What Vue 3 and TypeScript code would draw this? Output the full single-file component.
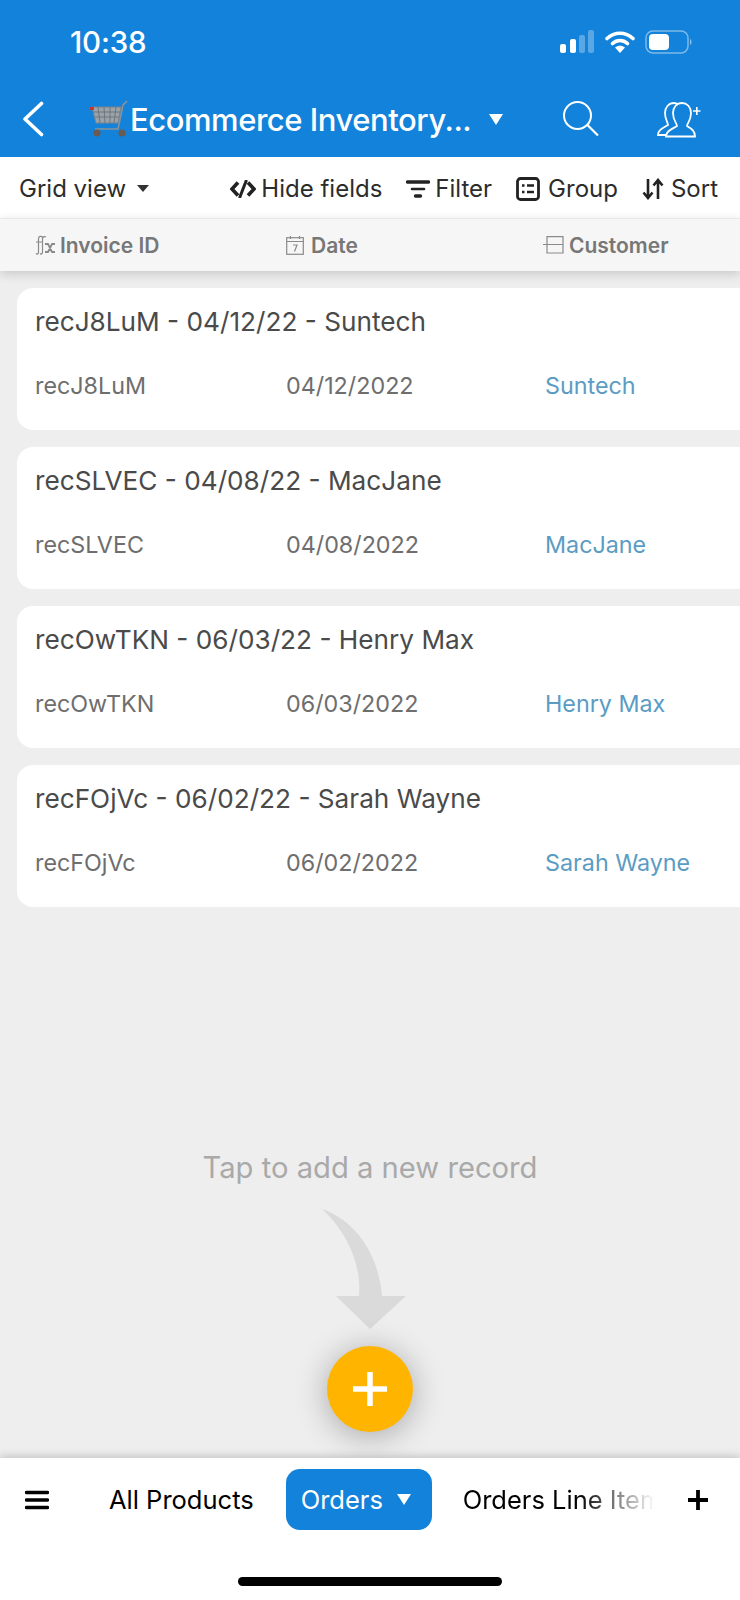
<script setup lang="ts">
interface Rec { id: string; short: string; date: string; customer: string }
const records: Rec[] = [
  { id: 'recJ8LuM', short: '04/12/22', date: '04/12/2022', customer: 'Suntech' },
  { id: 'recSLVEC', short: '04/08/22', date: '04/08/2022', customer: 'MacJane' },
  { id: 'recOwTKN', short: '06/03/22', date: '06/03/2022', customer: 'Henry Max' },
  { id: 'recFOjVc', short: '06/02/22', date: '06/02/2022', customer: 'Sarah Wayne' },
]
</script>

<template>
  <div class="page">
    <header class="head">
      <div class="status">
        <span class="time">10:38</span>
        <div class="sys">
          <svg width="35" height="23" viewBox="0 0 35 23">
            <rect x="0" y="14" width="6" height="9" rx="2" fill="#fff" />
            <rect x="10" y="9" width="6" height="14" rx="2" fill="#fff" />
            <rect x="19" y="5" width="6" height="18" rx="2" fill="#fff" opacity=".3" />
            <rect x="28" y="0" width="6" height="23" rx="2" fill="#fff" opacity=".3" />
          </svg>
          <svg width="30" height="23" viewBox="0 0 30 23">
            <path d="M2 8.500C9.500 1.500 20.500 1.500 28 8.500" fill="none" stroke="#fff" stroke-width="3.600" stroke-linecap="round" />
            <path d="M7.500 13.500C12 9.500 18 9.500 22.500 13.500" fill="none" stroke="#fff" stroke-width="3.600" stroke-linecap="round" />
            <path d="M10 17.500C13 15 17 15 20 17.500L15 23Z" fill="#fff" />
          </svg>
          <svg width="48" height="24" viewBox="0 0 48 24">
            <rect x="1" y="1" width="42" height="22" rx="7" fill="none" stroke="#fff" stroke-opacity=".45" stroke-width="1.500" />
            <rect x="4" y="4" width="20" height="16" rx="4" fill="#fff" />
            <path d="M45 9C47 10 47 14 45 15Z" fill="#fff" fill-opacity=".5" />
          </svg>
        </div>
      </div>
      <div class="nav">
        <svg class="back" width="24" height="36" viewBox="0 0 24 36">
          <path d="M20.500 2.500L4 18L20.500 33.500" fill="none" stroke="#fff" stroke-width="3.600" stroke-linecap="round" stroke-linejoin="round" />
        </svg>
        <svg class="cart" width="38" height="38" viewBox="0 0 38 38">
          <path d="M2 7H31L28 23H6Z" fill="#9aa3aa" stroke="#7b848a" />
          <path d="M8 7L10 23M14 7L15 23M20 7L20 23M26 7L24 23M3 12H30M5 17H29" stroke="#646c72" stroke-width=".8" />
          <path d="M37 1L33 5L28 29H5" fill="none" stroke="#8b9298" stroke-width="1.600" />
          <circle cx="7" cy="33" r="3.500" fill="#6a5a50" />
          <circle cx="32" cy="33" r="3.500" fill="#6a5a50" />
          <rect x="0" y="7" width="4" height="3" fill="#c33" />
        </svg>
        <span class="title">Ecommerce Inventory...</span>
        <span class="tri" />
        <svg class="search" width="38" height="38" viewBox="0 0 38 38">
          <circle cx="15.500" cy="15.500" r="13.500" fill="none" stroke="#fff" stroke-width="2" />
          <path d="M25.500 25L36 35.500" stroke="#fff" stroke-width="2.200" />
        </svg>
        <svg class="share" width="44" height="37" viewBox="0 0 44 37">
          <path d="M9 34H1C1 29 6 27 11 24C11 21 8 19 8 12C8 6 12 2 17 2C19 2 20 3 21 3" fill="none" stroke="#fff" stroke-width="1.800" />
          <path d="M9 35.500C9 30 15 28 20 25C20 22 16 20 16 12C16 6 20 2 25 2C30 2 34 6 34 12C34 20 30 22 30 25C35 28 38 30 38 35.500Z" fill="#1382da" stroke="#fff" stroke-width="1.800" />
          <path d="M36 10H43.500M39.800 6V14" stroke="#fff" stroke-width="1.600" />
        </svg>
      </div>
    </header>

    <div class="tools">
      <div class="view">Grid view<span class="tri small" /></div>
      <div class="actions">
        <span class="act hide">
          <svg width="26" height="18" viewBox="0 0 26 18">
            <path d="M8 2.500L2 9L8 15.500" fill="none" stroke="#222" stroke-width="3.600" />
            <path d="M18 2.500L24 9L18 15.500" fill="none" stroke="#222" stroke-width="3.600" />
            <path d="M16.500 0L9.500 18" stroke="#222" stroke-width="3" />
          </svg>Hide fields
        </span>
        <span class="act filter">
          <svg width="24" height="20" viewBox="0 0 24 20">
            <path d="M1.500 3H22.500" stroke="#222" stroke-width="3.400" stroke-linecap="round" />
            <path d="M6 10H18" stroke="#222" stroke-width="2.600" stroke-linecap="round" />
            <path d="M9.500 17H14.500" stroke="#222" stroke-width="3.400" stroke-linecap="round" />
          </svg>Filter
        </span>
        <span class="act group">
          <svg width="24" height="24" viewBox="0 0 24 24">
            <rect x="1.500" y="1.500" width="21" height="21" rx="3" fill="none" stroke="#222" stroke-width="2.800" />
            <path d="M6 8.500H8.500M11 8.500H18M6 15H8.500M11 15H18" stroke="#222" stroke-width="2.600" />
          </svg>Group
        </span>
        <span class="act sort">
          <svg width="22" height="22" viewBox="0 0 22 22">
            <path d="M6 1V19M1.500 14.500L6 20L10.500 14.500" fill="none" stroke="#222" stroke-width="2.600" />
            <path d="M16 21V3M11.500 7.500L16 2L20.500 7.500" fill="none" stroke="#222" stroke-width="2.600" />
          </svg>Sort
        </span>
      </div>
    </div>

    <div class="cols">
      <span class="col">
        <svg width="21" height="20" viewBox="0 0 21 20">
          <path d="M8 2.500C6 0.500 3.500 1 3.500 4V17C3.500 19 2 19.500 1 18.500M1 7H8M11 2C9 1 7.500 2 7.500 4V17C7.500 19 6 19.500 5 18.500" fill="none" stroke="#8a8a8a" stroke-width="1.200" />
          <path d="M10 9H13L17 17H20M20 9H17L13 17H10" fill="none" stroke="#8a8a8a" stroke-width="1.800" />
        </svg>Invoice ID
      </span>
      <span class="col date">
        <svg width="18" height="20" viewBox="0 0 18 20">
          <rect x=".7" y="2.700" width="16.600" height="16.600" fill="none" stroke="#8a8a8a" stroke-width="1.200" />
          <path d="M.7 6.500H17.300M4.500 1V4M13.500 1V4M7 10H11L8.500 16.500" fill="none" stroke="#8a8a8a" stroke-width="1.200" />
        </svg>Date
      </span>
      <span class="col cust">
        <svg width="21" height="18" viewBox="0 0 21 18">
          <path d="M4 .7H20V8.500H4ZM4 8.500V17H20V8.500M0 8.500H8" fill="none" stroke="#8a8a8a" stroke-width="1.200" />
        </svg>Customer
      </span>
    </div>

    <main class="list">
      <article v-for="r in records" :key="r.id" class="card">
        <div class="card-title">{{ r.id }} - {{ r.short }} - {{ r.customer }}</div>
        <div class="card-row">
          <span>{{ r.id }}</span>
          <span>{{ r.date }}</span>
          <span class="link">{{ r.customer }}</span>
        </div>
      </article>

      <div class="empty">
        <p class="hint">Tap to add a new record</p>
        <svg class="arrow" width="90" height="122" viewBox="0 0 90 122">
          <path d="M2 1C30 10 58 40 62 88H86L50 121L16 88H39C42 55 25 22 2 1Z" fill="#dadada" />
        </svg>
        <button class="fab" type="button">
          <svg width="36" height="36" viewBox="0 0 36 36"><path d="M18 1V35M1 18H35" stroke="#fff" stroke-width="5.500" /></svg>
        </button>
      </div>
    </main>

    <footer class="tabs">
      <div class="tabrow">
        <svg class="menu" width="24" height="20" viewBox="0 0 24 20">
          <path d="M1.500 2.500H22.500M1.500 10H22.500M1.500 17.500H22.500" stroke="#000" stroke-width="3.400" stroke-linecap="round" />
        </svg>
        <span class="tab first">All Products</span>
        <span class="tab active">Orders<span class="tri white" /></span>
        <span class="tab fade">Orders Line Items</span>
        <svg class="plus" width="22" height="22" viewBox="0 0 22 22"><path d="M11 1V21M1 11H21" stroke="#000" stroke-width="3.800" /></svg>
      </div>
      <div class="homebar" />
    </footer>
  </div>
</template>

<style>
html, body { margin: 0; background: #eee; }
</style>

<style scoped>
.page {
  width: 740px;
  height: 1600px;
  display: flex;
  flex-direction: column;
  background: #eee;
  font-family: Inter, "Noto Sans", sans-serif;
  overflow: hidden;
}
.head { height: 157px; background: #1382da; color: #fff; flex: none; }
.status { height: 83px; display: flex; justify-content: space-between; align-items: center; padding: 0 47px 0 70px; box-sizing: border-box; }
.time { font-size: 29.500px; font-weight: 500; letter-spacing: -.2px; }
.sys { display: flex; align-items: center; gap: 10px; }
.nav { height: 72px; display: flex; align-items: center; padding-left: 21px; }
.back { flex: none; }
.cart { margin-left: 45px; flex: none; }
.title { font-size: 31px; font-weight: 500; margin-left: 2px; white-space: nowrap; width: 359px; flex: none; letter-spacing: -.45px; }
.tri { display: inline-block; width: 0; height: 0; border-left: 7px solid transparent; border-right: 7px solid transparent; border-top: 11px solid #fff; flex: none; }
.search { margin-left: 59px; flex: none; }
.share { margin-left: 57px; flex: none; }
.tools { height: 61px; background: #fff; display: flex; align-items: center; justify-content: space-between; padding: 2px 22px 0 19px; flex: none; font-size: 24px; color: #2c2c2c; box-sizing: border-box; }
.view { display: flex; align-items: center; }
.tri.small { border-left-width: 6px; border-right-width: 6px; border-top: 7px solid #333; margin-left: 11px; }
.actions { display: flex; align-items: center; gap: 24px; }
.act { display: flex; align-items: center; gap: 5px; white-space: nowrap; }
.group { gap: 8px; }
.sort { gap: 7px; }
.cols {
  height: 52px;
  background: #f6f6f6;
  border-top: 1px solid #e8e8e8;
  display: grid;
  grid-template-columns: 251px 259px 1fr;
  padding-left: 35px;
  align-items: center;
  flex: none;
  box-shadow: 0 3px 10px rgba(0,0,0,.16);
  position: relative;
  z-index: 1;
  box-sizing: content-box;
}
.col { display: flex; align-items: center; gap: 4px; font-size: 21px; font-weight: 600; color: #777; }
.date { gap: 7px; }
.cust { gap: 5px; margin-left: -2px; }
.list { flex: 1; padding: 17px 0 0 17px; display: flex; flex-direction: column; gap: 17px; min-height: 0; }
.card { height: 142px; background: #fff; border-radius: 16px 0 0 16px; padding: 0 0 0 18px; box-sizing: border-box; flex: none; }
.card-title { font-size: 26.200px; color: #4a4a4a; height: 68px; line-height: 68px; white-space: nowrap; }
.card-row { display: grid; grid-template-columns: 251px 259px 1fr; font-size: 23.300px; color: #6e6e6e; line-height: 60px; }
.link { color: #5a9cc3; }
.empty { flex: 1; display: flex; flex-direction: column; align-items: center; min-height: 0; margin-left: -17px; }
.hint { margin: 227px 0 0; font-size: 29.200px; line-height: 34px; color: #a9a9a9; }
.arrow { margin: 23px 0 0 -10px; flex: none; display: block; }
.fab {
  width: 86px; height: 86px; border-radius: 50%; border: 0; padding: 0; margin-top: 16px;
  background: #ffb400; display: flex; align-items: center; justify-content: center; flex: none;
  box-shadow: 0 4px 32px rgba(0,0,0,.3);
}
.tabs { height: 142px; background: #fff; flex: none; position: relative; box-shadow: 0 -2px 8px rgba(0,0,0,.18); }
.tabrow { height: 61px; padding-top: 11px; display: flex; align-items: center; }
.menu { margin-left: 25px; flex: none; }
.tab { font-size: 25.500px; color: #000; white-space: nowrap; }
.first { margin-left: 60px; }
.active { margin-left: 32px; width: 146px; height: 61px; border-radius: 14px; background: #1382da; color: #fff; display: flex; align-items: center; gap: 14px; padding-left: 15px; box-sizing: border-box; }
.fade {
  margin-left: 31px; width: 192px; overflow: hidden;
  -webkit-mask-image: linear-gradient(to right, #000 60%, transparent 100%);
  mask-image: linear-gradient(to right, #000 60%, transparent 100%);
}
.plus { margin-left: 32px; flex: none; }
.homebar { width: 264px; height: 9px; border-radius: 5px; background: #000; margin: 47px auto 0; }
</style>
